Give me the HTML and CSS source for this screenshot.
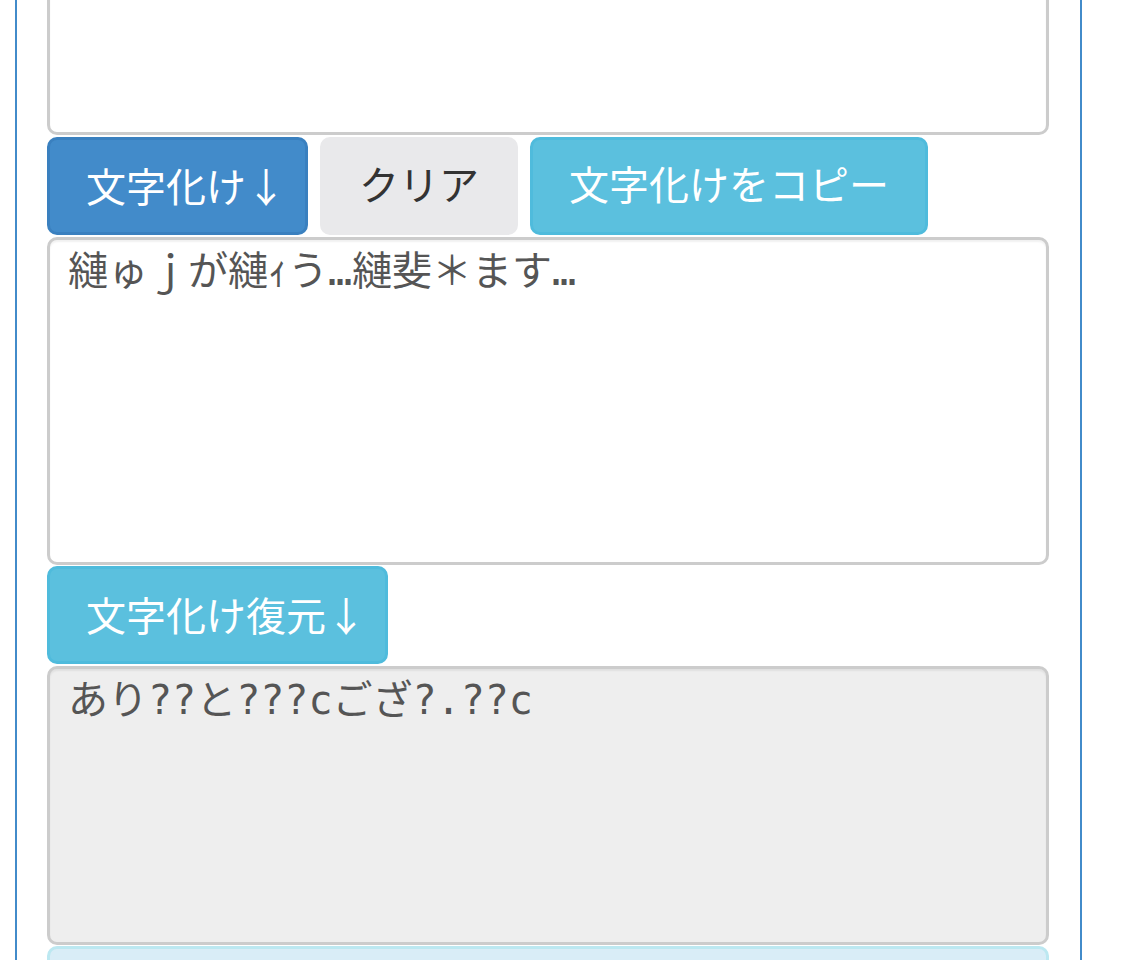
FILE: index.html
```html
<!DOCTYPE html>
<html lang="ja">
<head>
    <meta charset="UTF-8">
    <meta name="viewport" content="width=device-width, initial-scale=1.0">
    <title>文字化け</title>
    <link rel="stylesheet" href="styles.css">
</head>
<body>
    <div class="panel">
        <!--source text-->
        <textarea class="box box-source"></textarea>

        <div class="btn-row">
            <button class="btn btn-primary">文字化け<span class="arrow">↓</span></button>
            <button class="btn btn-default">クリア</button>
            <button class="btn btn-info">文字化けをコピー</button>
        </div>

        <textarea class="box box-garbled">縺ゅｊが縺ｨう…縺斐＊ます…</textarea>

        <div class="btn-row">
            <button class="btn btn-info">文字化け復元<span class="arrow">↓</span></button>
        </div>

        <textarea class="box box-restored" readonly>あり??と???cござ?.??c</textarea>

        <div class="alert-info"></div>
    </div>
</body>
</html>
```

FILE: styles.css
```css
*{
    box-sizing: border-box;
    font-family: "DejaVu Sans Mono", "Noto Sans CJK JP", sans-serif;
}

html, body{
    margin: 0;
    padding: 0;
    background: #fff;
    overflow: hidden;
}

.panel{
    margin: -220px 0 0 15px;
    width: 1067px;
    border-left: 2px solid #428bca;
    border-right: 2px solid #428bca;
    padding: 0 31px 0 30px;
    display: flex;
    flex-direction: column;
}

.box{
    display: block;
    width: 100%;
    border: 3px solid #ccc;
    border-radius: 10px;
    padding: 5px 18px;
    font-size: 40px;
    line-height: 52px;
    color: #555;
    background: #fff;
    resize: none;
    box-shadow: inset 0 2px 2px rgba(0,0,0,.06);
}

.box-source{
    height: 355px;
    margin-bottom: 2px;
}

.box-garbled{
    height: 328px;
    margin-bottom: 1px;
}

.box-restored{
    height: 279px;
    margin-bottom: 1px;
    background: #eee;
}

.btn-row{
    display: flex;
    gap: 12px;
    margin-bottom: 2px;
}

.btn{
    flex-shrink: 0;
    height: 98px;
    padding: 0 36px;
    font-size: 40px;
    line-height: 50px;
    white-space: nowrap;
    border: 3px solid transparent;
    border-radius: 10px;
    cursor: pointer;
}

/* narrow the full-width arrow */
.btn .arrow{
    font-family: "Noto Sans CJK JP", sans-serif;
    letter-spacing: -17px;
}

.btn-primary{
    background: #428bca;
    border-color: #3a80bf;
    color: #fff;
}

.btn-default{
    background: #e9e9eb;
    border-color: #e9e9eb;
    color: #333;
}

.btn-info{
    background: #5bc0de;
    border-color: #4fbbdc;
    color: #fff;
}

.alert-info{
    height: 80px;
    background: #d9edf7;
    border: 3px solid #bce8f1;
    border-radius: 10px;
}
```
